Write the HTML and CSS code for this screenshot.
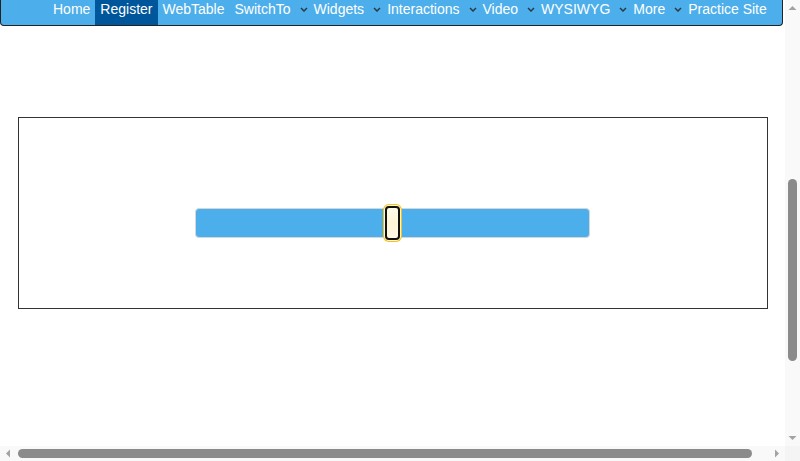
FILE: index.html
```html
<!DOCTYPE html>
<html lang="en">
<head>
<meta charset="utf-8">
<title>Slider</title>
<link rel="stylesheet" href="styles.css">
</head>
<body>
<div class="window">
  <div class="content">
    <header class="topnav">
      <a class="nav-link">Home</a>
      <a class="nav-link active">Register</a>
      <a class="nav-link">WebTable</a>
      <a class="nav-link dropdown">SwitchTo<svg class="caret" viewBox="0 0 8 5" width="8" height="5"><polyline points="1,1 4,4 7,1"/></svg></a>
      <a class="nav-link dropdown">Widgets<svg class="caret" viewBox="0 0 8 5" width="8" height="5"><polyline points="1,1 4,4 7,1"/></svg></a>
      <a class="nav-link dropdown">Interactions<svg class="caret" viewBox="0 0 8 5" width="8" height="5"><polyline points="1,1 4,4 7,1"/></svg></a>
      <a class="nav-link dropdown">Video<svg class="caret" viewBox="0 0 8 5" width="8" height="5"><polyline points="1,1 4,4 7,1"/></svg></a>
      <a class="nav-link dropdown">WYSIWYG<svg class="caret" viewBox="0 0 8 5" width="8" height="5"><polyline points="1,1 4,4 7,1"/></svg></a>
      <a class="nav-link dropdown">More<svg class="caret" viewBox="0 0 8 5" width="8" height="5"><polyline points="1,1 4,4 7,1"/></svg></a>
      <a class="nav-link">Practice Site</a>
    </header>
    <main class="page">
      <section class="slider-box">
        <div class="slider">
          <span class="handle"></span>
        </div>
      </section>
    </main>
  </div>
  <div class="vscroll">
    <svg class="arrow" viewBox="0 0 15 15" width="15" height="15"><polygon points="3.5,10 7.5,6 11.5,10"/></svg>
    <div class="vtrack"><div class="vthumb"></div></div>
    <svg class="arrow" viewBox="0 0 15 15" width="15" height="15"><polygon points="3.5,5 7.5,9 11.5,5"/></svg>
  </div>
  <div class="hscroll">
    <svg class="arrow" viewBox="0 0 15 15" width="15" height="15"><polygon points="10,3.5 6,7.5 10,11.5"/></svg>
    <div class="htrack"><div class="hthumb"></div></div>
    <svg class="arrow" viewBox="0 0 15 15" width="15" height="15"><polygon points="5,3.5 9,7.5 5,11.5"/></svg>
  </div>
  <div class="corner"></div>
</div>
</body>
</html>
```

FILE: styles.css
```css
html, body {
  margin: 0;
  padding: 0;
  background: #fff;
}

body {
  font-family: "Liberation Sans", Arial, sans-serif;
}

.window {
  width: 800px;
  height: 461px;
  display: grid;
  grid-template-columns: 785px 15px;
  grid-template-rows: 446px 15px;
  overflow: hidden;
}

.content {
  overflow: hidden;
  background: #fff;
}

.topnav {
  box-sizing: border-box;
  width: 783px;
  height: 26px;
  display: flex;
  align-items: stretch;
  padding-left: 47px;
  background: #4caeea;
  border: 1px solid #222;
  border-top: none;
  border-radius: 0 0 4px 4px;
}

.nav-link {
  display: flex;
  align-items: flex-start;
  padding: 1px 5px 0;
  height: 25px;
  box-sizing: border-box;
  font-size: 14px;
  line-height: 16px;
  color: #fff;
  text-decoration: none;
  white-space: nowrap;
}

.nav-link.active {
  background: #00569b;
}

.nav-link.dropdown {
  padding-right: 1px;
}

.caret {
  margin: 6px 0 0 9px;
  fill: none;
  stroke: #2b3a47;
  stroke-width: 1.5;
}

.page {
  padding: 91px 0 0 18px;
}

.slider-box {
  box-sizing: border-box;
  width: 750px;
  height: 192px;
  border: 1px solid #333;
  padding: 90px 0 0 176px;
}

.slider {
  position: relative;
  box-sizing: border-box;
  width: 395px;
  height: 30px;
  background: #4caeea;
  border: 1px solid #d6d6d6;
  border-radius: 4px;
}

.handle {
  position: absolute;
  top: -3px;
  left: calc(50% - 7.5px);
  box-sizing: border-box;
  width: 15px;
  height: 34px;
  border: 2px solid #111;
  border-radius: 4px;
  background: linear-gradient(#fffbea, #fff4d6 50%, #fff8e4);
  box-shadow: 0 0 0 1px #fff6d8, 0 0 0 2px #f4c318;
}

/* scrollbars */
.vscroll,
.hscroll {
  background: #f9f9f9;
  display: flex;
}

.vscroll {
  flex-direction: column;
}

.arrow {
  flex: none;
  fill: #a3a3a3;
}

.vtrack {
  flex: 1;
  padding: 164px 3px 0 3px;
}

.vthumb {
  height: 182px;
  border-radius: 5px;
  background: #8b8b8b;
}

.htrack {
  flex: 1;
  padding: 3px 0 3px 3px;
}

.hthumb {
  width: 734px;
  height: 9px;
  border-radius: 5px;
  background: #8b8b8b;
}

.corner {
  background: #f4f4f4;
}
```
